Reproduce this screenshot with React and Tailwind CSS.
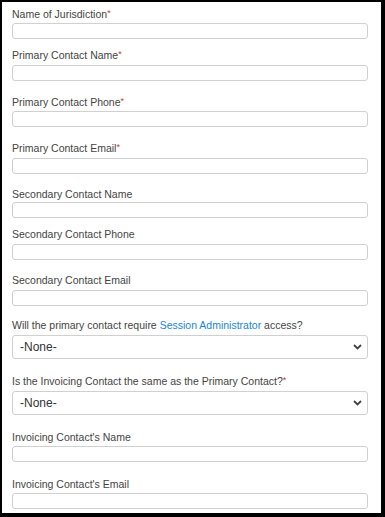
const FIELDS = [
  { label: 'Name of Jurisdiction', req: true, mt: 'mt-[6px]', gap: 'mt-[2px]' },
  { label: 'Primary Contact Name', req: true, mt: 'mt-[10px]', gap: 'mt-[3px]' },
  { label: 'Primary Contact Phone', req: true, mt: 'mt-[15px]', gap: 'mt-[2px]' },
  { label: 'Primary Contact Email', req: true, mt: 'mt-[15px]', gap: 'mt-[3px]' },
  { label: 'Secondary Contact Name', mt: 'mt-[14px]', gap: 'mt-[1px]' },
  { label: 'Secondary Contact Phone', mt: 'mt-[10px]', gap: 'mt-[3px]' },
  { label: 'Secondary Contact Email', mt: 'mt-[14px]', gap: 'mt-[3px]' },
  { label: 'session', select: true, mt: 'mt-[13px]', gap: 'mt-[3px]' },
  { label: 'Is the Invoicing Contact the same as the Primary Contact?', req: true, select: true, mt: 'mt-[16px]', gap: 'mt-[3px]' },
  { label: "Invoicing Contact's Name", mt: 'mt-[16px]', gap: 'mt-[2px]' },
  { label: "Invoicing Contact's Email", mt: 'mt-[16px]', gap: 'mt-[2px]' },
];

function Label({ field }) {
  if (field.label === 'session') {
    return (
      <div className="text-[10.5px] leading-[13px] text-[#444]">
        Will the primary contact require{' '}
        <span className="text-[#1a86d0]">Session Administrator</span> access?
      </div>
    );
  }
  return (
    <div className="text-[10.5px] leading-[13px] text-[#444]">
      {field.label}
      {field.req && <span className="text-[#c23934] text-[9px] align-top leading-[10px]">*</span>}
    </div>
  );
}

function Chevron() {
  return (
    <svg width="9" height="6" viewBox="0 0 9 6" className="text-[#444]">
      <path d="M1 1l3.5 3.5L8 1" fill="none" stroke="currentColor" strokeWidth="1.8" />
    </svg>
  );
}

export default function App() {
  return (
    <div className="w-[385px] h-[517px] bg-black pl-[2px] pt-[2px] pr-[4px] pb-[4px]" style={{ fontFamily: '"Liberation Sans", Arial, sans-serif' }}>
      <div className="h-full bg-white pl-[10px] pr-[13px] overflow-hidden">
        {FIELDS.map((f, i) => (
          <div key={i} className={f.mt}>
            <Label field={f} />
            {f.select ? (
              <div className={`${f.gap} h-[24px] rounded-[3px] border border-[#d0d0d0] flex items-center justify-between pl-[7px] pr-[5px]`}>
                <span className="text-[12px] text-[#333]">-None-</span>
                <Chevron />
              </div>
            ) : (
              <div className={`${f.gap} h-[16px] rounded-[3px] border border-[#d0d0d0]`} />
            )}
          </div>
        ))}
      </div>
    </div>
  );
}
